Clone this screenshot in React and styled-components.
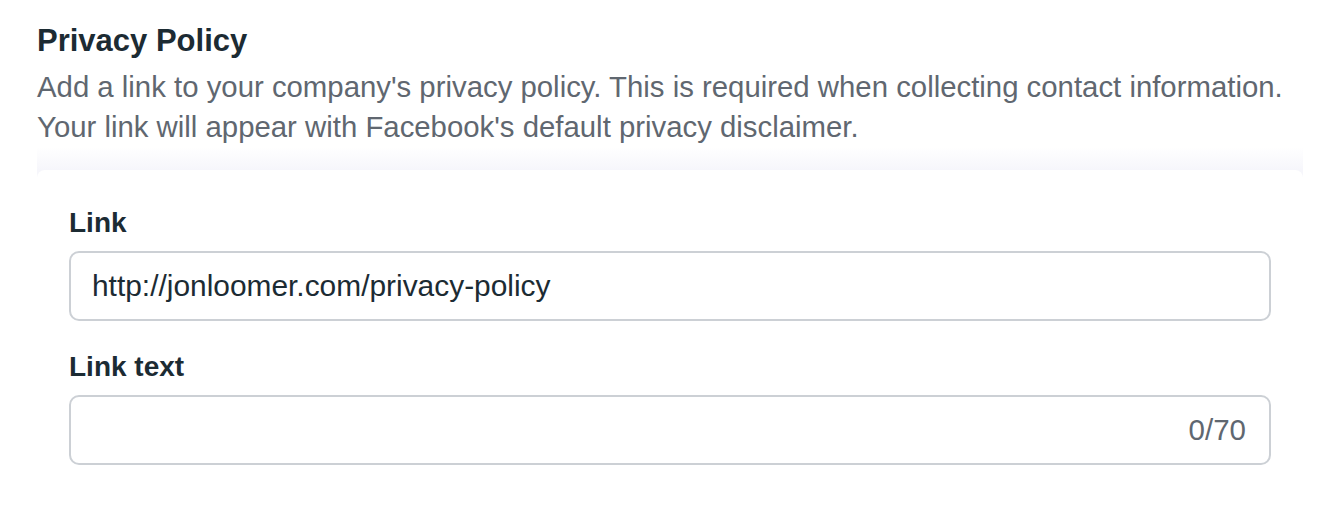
import styled, { createGlobalStyle } from "styled-components";

const GlobalStyle = createGlobalStyle`
  html, body {
    margin: 0;
    padding: 0;
    background: #ffffff;
  }
  body {
    font-family: "Liberation Sans", Arial, sans-serif;
  }
`;

const Page = styled.div`
  width: 1330px;
  height: 510px;
  overflow: hidden;
  padding: 22px 27px 0 37px;
  box-sizing: border-box;
`;

const Title = styled.h2`
  margin: 0;
  font-size: 31px;
  line-height: 38px;
  font-weight: 700;
  color: #1c2b33;
`;

const Description = styled.p`
  margin: 7px 0 0;
  font-size: 29.35px;
  line-height: 40px;
  color: #606770;
`;

const Panel = styled.div`
  padding-top: 23px;
  background: linear-gradient(
    to bottom,
    rgba(246, 247, 251, 0) 0px,
    #f6f6fb 23px,
    #f6f6fb 40px,
    #ffffff 40px
  );
`;

const Card = styled.div`
  background: #ffffff;
  border-radius: 8px;
  padding: 36px 32px 60px;
  display: flex;
  flex-direction: column;
`;

const Field = styled.div`
  display: flex;
  flex-direction: column;
  margin-top: ${(props) => (props.first ? "0" : "29px")};
`;

const Label = styled.label`
  font-size: 28px;
  line-height: 34px;
  font-weight: 700;
  color: #1c2b33;
  margin-bottom: 11px;
`;

const InputBox = styled.div`
  height: 70px;
  box-sizing: border-box;
  border: 2px solid #ccd0d5;
  border-radius: 10px;
  display: flex;
  align-items: center;
  padding: 0 23px 0 21px;
  background: #ffffff;
`;

const Input = styled.input`
  flex: 1;
  min-width: 0;
  border: none;
  outline: none;
  background: transparent;
  padding: 0;
  font-family: "Liberation Sans", Arial, sans-serif;
  font-size: 29.9px;
  color: #1c2b33;
`;

const Counter = styled.span`
  font-size: 29.5px;
  color: #606770;
  margin-left: 12px;
`;

export default function App() {
  return (
    <>
      <GlobalStyle />
      <Page>
        <Title>Privacy Policy</Title>
        <Description>
          Add a link to your company's privacy policy. This is required when
          collecting contact information.
          <br />
          Your link will appear with Facebook's default privacy disclaimer.
        </Description>
        <Panel>
          <Card>
            <Field first>
              <Label>Link</Label>
              <InputBox>
                <Input defaultValue="http://jonloomer.com/privacy-policy" />
              </InputBox>
            </Field>
            <Field>
              <Label>Link text</Label>
              <InputBox>
                <Input defaultValue="" />
                <Counter>0/70</Counter>
              </InputBox>
            </Field>
          </Card>
        </Panel>
      </Page>
    </>
  );
}
